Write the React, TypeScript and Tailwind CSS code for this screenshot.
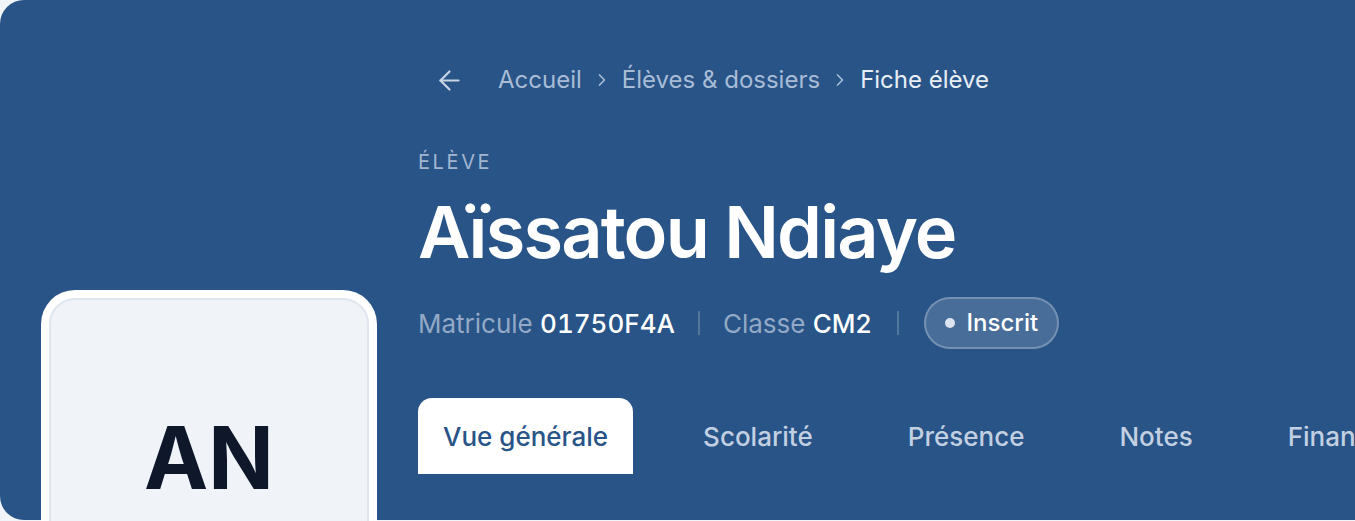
import { ArrowLeft, ChevronRight } from 'lucide-react';

const TABS = ['Vue générale', 'Scolarité', 'Présence', 'Notes', 'Finances'];

export default function App() {
  return (
    <div
      className="h-[521px] w-[1355px] overflow-hidden bg-[#f1f5f9]"
      style={{ fontFamily: 'Inter, "Noto Sans", sans-serif' }}
    >
      <div className="flex h-[520px] w-[1700px] gap-[41px] rounded-l-[24px] bg-[#285487] pl-[41px]">
        {/* avatar */}
        <div className="mt-[290px] h-[336px] w-[336px] shrink-0 rounded-[34px] bg-white p-[8px]">
          <div className="flex h-full w-full items-center justify-center rounded-[26px] border-2 border-[#dfe6ef] bg-[#f0f4f9]">
            <span className="text-[86px] font-bold leading-none text-[#0f172a]">AN</span>
          </div>
        </div>

        {/* content */}
        <div className="flex min-w-0 flex-1 flex-col pt-[60px]">
          <nav className="flex h-[40px] items-center text-[24px] text-[#a9bcd6]">
            <span className="flex w-[80px] items-center pl-[16px] text-[#c9d5e5]">
              <ArrowLeft className="h-[31px] w-[31px]" strokeWidth={1.7} aria-hidden />
            </span>
            <span>Accueil</span>
            <ChevronRight className="mx-[10px] h-[20px] w-[20px]" strokeWidth={2} aria-hidden />
            <span>Élèves &amp; dossiers</span>
            <ChevronRight className="mx-[10px] h-[20px] w-[20px]" strokeWidth={2} aria-hidden />
            <span className="text-[#e8eef6]">Fiche élève</span>
          </nav>

          <div className="mt-[50px] text-[20px] uppercase leading-[24px] tracking-[0.13em] text-[#a3b6d0]">
            Élève
          </div>

          <h1 className="mt-[14px] text-[72px] font-semibold leading-[88px] tracking-[-0.025em] text-white">
            Aïssatou Ndiaye
          </h1>

          <div className="mt-[21px] flex h-[52px] items-center text-[26px]">
            <span className="text-[#93a9c6]">
              Matricule <span className="font-medium tabular-nums text-white">01750F4A</span>
            </span>
            <span className="mx-[23px] h-[24px] w-[2px] bg-white/20" />
            <span className="text-[#93a9c6]">
              Classe <span className="font-medium text-white">CM2</span>
            </span>
            <span className="mx-[25px] h-[24px] w-[2px] bg-white/20" />
            <span className="flex h-[52px] items-center gap-[12px] rounded-full border-2 border-white/25 bg-white/15 px-[19px] text-[24px] font-medium text-white">
              <span className="h-[10px] w-[10px] rounded-full bg-[#dbe4ef]" />
              Inscrit
            </span>
          </div>

          <div className="mt-[49px] flex gap-[45px]">
            {TABS.map((tab, i) => (
              <div
                key={tab}
                className={
                  i === 0
                    ? 'flex h-[76px] items-center rounded-t-[14px] bg-white px-[25px] text-[26px] font-medium text-[#285487]'
                    : 'flex h-[76px] items-center px-[25px] text-[26px] font-medium text-[#c3d0e2]'
                }
              >
                {tab}
              </div>
            ))}
          </div>
        </div>
      </div>
    </div>
  );
}
